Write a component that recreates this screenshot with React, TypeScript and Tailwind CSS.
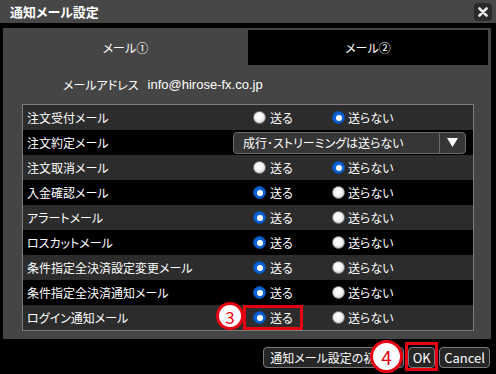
import React from 'react';

type Row = { label: string; send?: boolean; dropdown?: boolean; mark?: boolean };

const rows: Row[] = [
  { label: '注文受付メール', send: false },
  { label: '注文約定メール', dropdown: true },
  { label: '注文取消メール', send: false },
  { label: '入金確認メール', send: true },
  { label: 'アラートメール', send: true },
  { label: 'ロスカットメール', send: true },
  { label: '条件指定全決済設定変更メール', send: true },
  { label: '条件指定全決済通知メール', send: true },
  { label: 'ログイン通知メール', send: true, mark: true },
];

const font = { fontFamily: "'Noto Sans CJK JP', 'Liberation Sans', sans-serif" };

const Radio = ({ on }: { on: boolean }) =>
  on ? (
    <span className="w-[13px] h-[13px] rounded-full bg-[#0b62d6] border border-[#0a4ea8] flex items-center justify-center shrink-0">
      <span className="w-[6px] h-[6px] rounded-full bg-white" />
    </span>
  ) : (
    <span className="w-[13px] h-[13px] rounded-full border border-[#7e7e7e] shrink-0 bg-[radial-gradient(circle_at_45%_40%,#ffffff_0%,#f4f4f4_45%,#b4b4b4_100%)]" />
  );

const Marker = ({ n, className }: { n: string; className: string }) => (
  <div
    className={`absolute rounded-full bg-white border-[3px] border-[#e60012] flex items-center justify-center text-[#e60012] ${className}`}
    style={font}
  >
    {n}
  </div>
);

export default function App() {
  return (
    <div
      className="relative w-[496px] h-[374px] bg-black text-white overflow-hidden [font-feature-settings:'palt']"
      style={font}
    >
      {/* title bar */}
      <div className="h-[23px] bg-[#474747] flex items-center justify-between pl-[10px] pr-[4px]">
        <span className="text-[13px] font-bold leading-none">通知メール設定</span>
        <div className="w-[18px] h-[18px] rounded-[4px] bg-[#2a2a2a] flex items-center justify-center">
          <svg width="10" height="10" viewBox="0 0 10 10">
            <path d="M1.5 1.5 L8.5 8.5 M8.5 1.5 L1.5 8.5" stroke="#e8e8e8" strokeWidth="2.6" strokeLinecap="round" />
          </svg>
        </div>
      </div>

      {/* panel */}
      <div className="mt-[5px] ml-[3px] w-[488px] h-[311px] bg-[#454545]">
        <div className="flex pt-[2px] h-[37px]">
          <div className="flex-1 flex items-center justify-center text-[12px] leading-none">メール①</div>
          <div className="w-[240px] mr-[3px] bg-black flex items-center justify-center text-[12px] leading-none">メール②</div>
        </div>

        <div className="h-[39px] flex items-center pl-[60px] text-[12px] leading-none">
          <span>メールアドレス</span>
          <span className="ml-[9px] text-[13px]" style={{ fontFamily: "'Liberation Sans', sans-serif" }}>
            info@hirose-fx.co.jp
          </span>
        </div>

        <div className="ml-[19px] w-[452px] border border-[#7d7d7d]">
          {rows.map((r, i) => (
            <div
              key={r.label}
              className={`h-[25px] flex items-center text-[12px] leading-none ${i % 2 === 0 ? 'bg-[#2c2c2c]' : 'bg-black'}`}
            >
              {r.dropdown ? (
                <>
                  <div className="w-[210px] pl-[4px]">{r.label}</div>
                  <div className="w-[233px] h-[22px] rounded-[4px] border border-[#6a6a6a] bg-[#363636] flex items-center">
                    <span className="flex-1 pl-[9px]">成行･ストリーミングは送らない</span>
                    <span className="w-[26px] h-full border-l border-[#6a6a6a] flex items-center justify-center">
                      <svg width="11" height="9" viewBox="0 0 11 9">
                        <path d="M0 0 H11 L5.5 9 Z" fill="#ffffff" />
                      </svg>
                    </span>
                  </div>
                </>
              ) : (
                <>
                  <div className="w-[230px] pl-[4px] whitespace-nowrap">{r.label}</div>
                  <div className="w-[79px] flex items-center gap-[4px]">
                    <Radio on={!!r.send} />
                    <span>送る</span>
                  </div>
                  <div className="flex items-center gap-[3px]">
                    <Radio on={!r.send} />
                    <span>送らない</span>
                  </div>
                </>
              )}
            </div>
          ))}
        </div>
      </div>

      {/* buttons */}
      <div className="flex justify-end gap-[4px] pr-[6px] pt-[8px] text-[12px] leading-none">
        <button className="h-[21px] w-[141px] px-[6px] rounded-[4px] border border-[#7a7a7a] bg-[#262626] text-white whitespace-nowrap overflow-hidden text-left">
          通知メール設定の初期化
        </button>
        <button className="h-[21px] w-[27px] rounded-[4px] border border-[#7a7a7a] bg-[#262626] text-white text-[13px]">
          OK
        </button>
        <button className="h-[21px] px-[4px] rounded-[4px] border border-[#7a7a7a] bg-[#262626] text-white text-[13px]">
          Cancel
        </button>
      </div>

      {/* annotations */}
      <div className="absolute left-[243px] top-[305px] w-[60px] h-[25px] border-[3px] border-[#e60012]" />
      <div className="absolute left-[405px] top-[342px] w-[33px] h-[29px] border-[3px] border-[#e60012]" />
      <Marker n="3" className="left-[216px] top-[302px] w-[28px] h-[28px] text-[17px] leading-none" />
      <Marker n="4" className="left-[370px] top-[340px] w-[33px] h-[33px] text-[19px] leading-none" />
    </div>
  );
}
